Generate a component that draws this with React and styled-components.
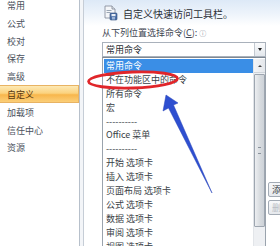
import styled, { createGlobalStyle } from "styled-components";

const Global = createGlobalStyle`
    html, body {
        margin: 0;
        padding: 0;
        background: #ffffff;
        overflow: hidden;
    }
    body {
        font-family: "Noto Sans CJK SC", "Noto Sans", "Liberation Sans", sans-serif;
    }
`;

const Page = styled.div`
    position: relative;
    width: 280px;
    height: 246px;
    overflow: hidden;
    display: flex;
    background: #ffffff;
`;

const Sidebar = styled.div`
    width: 79px;
    flex: none;
    border-right: 1px solid #b7c0cb;
    margin-top: -4px;
`;

const NavItem = styled.div`
    height: 17.8px;
    line-height: 17.8px;
    padding-left: 7px;
    font-size: 9px;
    color: ${(p) => (p.$active ? "#5a3a10" : "#4a515c")};
    background: ${(p) =>
        p.$active
            ? "linear-gradient(#fde9b4 0%, #fbd27e 45%, #f8b64c 55%, #fbcf78 100%)"
            : "transparent"};
    border: 1px solid ${(p) => (p.$active ? "#e8b363" : "transparent")};
    border-left: none;
    box-sizing: border-box;
`;

const Gutter = styled.div`
    width: 3px;
    flex: none;
    background: #f3f5f8;
    border-right: 1px solid #c6cdd6;
`;

const Main = styled.div`
    flex: 1;
    min-width: 0;
    display: flex;
    flex-direction: column;
`;

const Header = styled.div`
    flex: none;
    height: 26px;
    display: flex;
    align-items: center;
    gap: 5px;
    padding-left: 20px;
    background: linear-gradient(#dde9f7 0%, #eef4fb 55%, #ffffff 100%);
`;

const HeaderText = styled.span`
    font-size: 10px;
    color: #2b2f36;
    white-space: nowrap;
`;

const Body = styled.div`
    flex: none;
    display: flex;
    gap: 2px;
    padding-left: 18px;
    padding-top: 1px;
`;

const Column = styled.div`
    width: 164px;
    flex: none;
    display: flex;
    flex-direction: column;
`;

const Label = styled.div`
    font-size: 9px;
    line-height: 12px;
    color: #3d4450;
    white-space: nowrap;
`;

const Info = styled.span`
    font-size: 7px;
    color: #8a929c;
    margin-left: 2px;
`;

const Combo = styled.div`
    margin-top: 3px;
    height: 15px;
    box-sizing: border-box;
    border: 1px solid #a9b1bb;
    display: flex;
    align-items: center;
    background: #ffffff;
`;

const ComboText = styled.span`
    flex: 1;
    padding-left: 3px;
    font-size: 9px;
    color: #2b2f36;
`;

const ComboButton = styled.span`
    width: 10px;
    height: 13px;
    border-left: 1px solid #c3c9d0;
    background: linear-gradient(#fafbfc, #e3e7ec);
    display: flex;
    align-items: center;
    justify-content: center;
    &::after {
        content: "";
        border-left: 2.5px solid transparent;
        border-right: 2.5px solid transparent;
        border-top: 3px solid #222;
    }
`;

const ListBox = styled.div`
    display: flex;
    border: 1px solid #9aa3ad;
    border-top-color: #7e8893;
    height: 200px;
    padding: 1px 0 0 1px;
    background: #ffffff;
`;

const Options = styled.div`
    flex: 1;
    min-width: 0;
`;

const Option = styled.div`
    height: 13.9px;
    line-height: 13.9px;
    padding-left: 2px;
    font-size: 9px;
    white-space: nowrap;
    color: ${(p) => (p.$selected ? "#ffffff" : "#3a3f47")};
    background: ${(p) => (p.$selected ? "#3a8ee6" : "transparent")};
`;

const ScrollBar = styled.div`
    width: 11px;
    flex: none;
    display: flex;
    flex-direction: column;
    background: #eef0f3;
    border-left: 1px solid #e2e5e9;
`;

const ScrollArrow = styled.div`
    height: 13px;
    display: flex;
    align-items: center;
    justify-content: center;
    background: linear-gradient(90deg, #f4f5f7, #e4e7eb);
    border-bottom: 1px solid #cfd4da;
    &::after {
        content: "";
        border-left: 2px solid transparent;
        border-right: 2px solid transparent;
        border-bottom: 2.5px solid #444;
    }
`;

const Thumb = styled.div`
    height: 151px;
    margin-top: 1px;
    border: 1px solid #9ea6b0;
    border-radius: 1px;
    background: linear-gradient(90deg, #eceef1, #d6dade 60%, #cdd2d8);
    display: flex;
    align-items: center;
    justify-content: center;
    &::after {
        content: "";
        width: 3px;
        height: 5px;
        border-top: 1px solid #8a929c;
        border-bottom: 1px solid #8a929c;
    }
`;

const Actions = styled.div`
    display: flex;
    flex-direction: column;
    gap: 3px;
    padding-top: 155px;
`;

const ActionButton = styled.div`
    width: 60px;
    height: 15px;
    box-sizing: border-box;
    border: 1px solid #a3abb5;
    border-radius: 2px;
    background: linear-gradient(#f7f8fa, #e6e9ed);
    font-size: 9px;
    line-height: 13px;
    padding-left: 3px;
    white-space: nowrap;
    color: ${(p) => (p.$disabled ? "#b9bec5" : "#333840")};
`;

const Overlay = styled.svg`
    position: absolute;
    left: 0;
    top: 0;
    pointer-events: none;
`;

const navItems = ["常用", "公式", "校对", "保存", "高级", "自定义", "加载项", "信任中心", "资源"];

const commands = [
    "常用命令",
    "不在功能区中的命令",
    "所有命令",
    "宏",
    "----------",
    "Office 菜单",
    "----------",
    "开始 选项卡",
    "插入 选项卡",
    "页面布局 选项卡",
    "公式 选项卡",
    "数据 选项卡",
    "审阅 选项卡",
    "视图 选项卡",
];

function QatIcon() {
    return (
        <svg width="14" height="16" viewBox="0 0 14 16">
            <path d="M1 1 H8 L11 4 V13 H1 Z" fill="#f4f6f9" stroke="#7d8794" strokeWidth="0.8" />
            <path d="M8 1 V4 H11" fill="#dfe4ea" stroke="#7d8794" strokeWidth="0.8" />
            <rect x="2.5" y="5" width="5" height="1" fill="#9aa6b4" />
            <rect x="2.5" y="7" width="4" height="1" fill="#9aa6b4" />
            <rect x="6" y="8" width="7" height="7" rx="1" fill="#4a6fa8" stroke="#2d4a78" strokeWidth="0.6" />
            <rect x="7.5" y="9" width="4" height="2.2" fill="#e8eef6" />
            <rect x="8" y="12" width="3" height="2.5" fill="#9bb3d6" />
        </svg>
    );
}

export default function App() {
    return (
        <Page>
            <Global />
            <Sidebar>
                {navItems.map((item) => (
                    <NavItem key={item} $active={item === "自定义"}>
                        {item}
                    </NavItem>
                ))}
            </Sidebar>
            <Gutter />
            <Main>
                <Header>
                    <QatIcon />
                    <HeaderText>自定义快速访问工具栏。</HeaderText>
                </Header>
                <Body>
                    <Column>
                        <Label>
                            从下列位置选择命令(<u>C</u>):<Info>ⓘ</Info>
                        </Label>
                        <Combo>
                            <ComboText>常用命令</ComboText>
                            <ComboButton />
                        </Combo>
                        <ListBox>
                            <Options>
                                {commands.map((c, i) => (
                                    <Option key={i} $selected={i === 0}>
                                        {c}
                                    </Option>
                                ))}
                            </Options>
                            <ScrollBar>
                                <ScrollArrow />
                                <Thumb />
                            </ScrollBar>
                        </ListBox>
                    </Column>
                    <Actions>
                        <ActionButton>添加</ActionButton>
                        <ActionButton $disabled>删除</ActionButton>
                    </Actions>
                </Body>
            </Main>
            <Overlay width="280" height="246" viewBox="0 0 280 246">
                <ellipse
                    cx="133"
                    cy="80"
                    rx="44.5"
                    ry="8"
                    fill="none"
                    stroke="#e0262a"
                    strokeWidth="2.8"
                    transform="rotate(-2 133 80)"
                />
                <path
                    d="M166 95 L178 103 L173.5 105 L212 193 L168.5 108 L163 111 Z"
                    fill="#2e4fd0"
                    stroke="#2742b8"
                    strokeWidth="0.5"
                    strokeLinejoin="round"
                />
            </Overlay>
        </Page>
    );
}
